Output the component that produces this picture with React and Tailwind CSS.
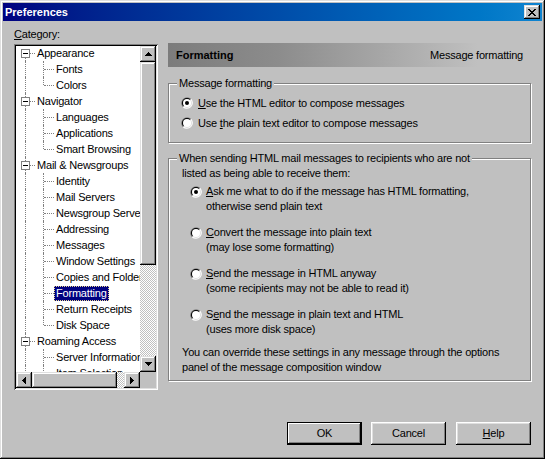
import React from "react";

const raised =
  "shadow-[inset_-1px_-1px_#000,inset_1px_1px_#fff,inset_-2px_-2px_#808080,inset_2px_2px_#dfdfdf]";
const raisedSb =
  "shadow-[inset_-1px_-1px_#000,inset_1px_1px_#dfdfdf,inset_-2px_-2px_#808080,inset_2px_2px_#fff]";
const etched = "border border-[#808080] shadow-[1px_1px_0_#fff,inset_1px_1px_0_#fff]";
const checker =
  "bg-[image:repeating-conic-gradient(#c0c0c0_0%_25%,#fff_0%_50%)] bg-[length:2px_2px]";

function Radio({ checked }) {
  return (
    <svg width="12" height="12" viewBox="0 0 12 12" className="shrink-0">
      <path d="M1.76 10.24 A6 6 0 0 1 10.24 1.76 Z" fill="#808080" />
      <path d="M10.24 1.76 A6 6 0 0 1 1.76 10.24 Z" fill="#fff" />
      <path d="M2.46 9.54 A5 5 0 0 1 9.54 2.46 Z" fill="#000" />
      <path d="M9.54 2.46 A5 5 0 0 1 2.46 9.54 Z" fill="#dfdfdf" />
      <circle cx="6" cy="6" r="4" fill="#fff" />
      {checked && <circle cx="6" cy="6" r="2" fill="#000" />}
    </svg>
  );
}

function Arrow({ dir }) {
  if (dir === "up")
    return (
      <svg width="7" height="4" viewBox="0 0 7 4" shapeRendering="crispEdges">
        <path d="M3 0h1v1h1v1h1v1h1v1H0V3h1V2h1V1h1z" fill="#000" />
      </svg>
    );
  if (dir === "down")
    return (
      <svg width="7" height="4" viewBox="0 0 7 4" shapeRendering="crispEdges">
        <path d="M0 0h7v1H6v1H5v1H4v1H3V3H2V2H1V1H0z" fill="#000" />
      </svg>
    );
  if (dir === "left")
    return (
      <svg width="4" height="7" viewBox="0 0 4 7" shapeRendering="crispEdges">
        <path d="M3 0h1v7H3V6H2V5H1V4H0V3h1V2h1V1h1z" fill="#000" />
      </svg>
    );
  return (
    <svg width="4" height="7" viewBox="0 0 4 7" shapeRendering="crispEdges">
      <path d="M0 0h1v1h1v1h1v1h1v1H3v1H2v1H1v1H0z" fill="#000" />
    </svg>
  );
}

const rows = [
  { t: "Appearance", l: 0, first: true },
  { t: "Fonts", l: 1 },
  { t: "Colors", l: 1, last: true },
  { t: "Navigator", l: 0 },
  { t: "Languages", l: 1 },
  { t: "Applications", l: 1 },
  { t: "Smart Browsing", l: 1, last: true },
  { t: "Mail & Newsgroups", l: 0 },
  { t: "Identity", l: 1 },
  { t: "Mail Servers", l: 1 },
  { t: "Newsgroup Servers", l: 1 },
  { t: "Addressing", l: 1 },
  { t: "Messages", l: 1 },
  { t: "Window Settings", l: 1 },
  { t: "Copies and Folders", l: 1 },
  { t: "Formatting", l: 1, sel: true },
  { t: "Return Receipts", l: 1 },
  { t: "Disk Space", l: 1, last: true },
  { t: "Roaming Access", l: 0 },
  { t: "Server Information", l: 1 },
  { t: "Item Selection", l: 1 },
];

function Row({ t, l, first, last, sel }) {
  return (
    <div className="relative h-[16px] shrink-0 flex items-center whitespace-nowrap">
      <span
        className={`absolute left-[9px] ${first ? "top-[8px]" : "top-0"} bottom-0 border-l border-dotted border-[#808080]`}
      />
      {l === 0 ? (
        <>
          <span className="absolute left-[14px] top-[8px] w-[5px] border-t border-dotted border-[#808080]" />
          <span className="absolute left-[5px] top-[4px] w-[9px] h-[9px] border border-[#808080] bg-white flex items-center justify-center">
            <span className="w-[5px] h-px bg-black" />
          </span>
        </>
      ) : (
        <>
          <span
            className={`absolute left-[27px] top-0 ${last ? "h-[8px]" : "bottom-0"} border-l border-dotted border-[#808080]`}
          />
          <span className="absolute left-[28px] top-[8px] w-[10px] border-t border-dotted border-[#808080]" />
        </>
      )}
      <span
        className={`${l === 0 ? "ml-[19px]" : "ml-[38px]"} px-[1px] leading-[13px] border ${
          sel
            ? "bg-[#000080] text-white border-dotted border-[#e8d890]"
            : "border-transparent text-black"
        }`}
      >
        {t}
      </span>
    </div>
  );
}

function Button({ children, def, className = "" }) {
  return (
    <div
      className={`w-[75px] h-[23px] flex items-center justify-center bg-[#c0c0c0] ${
        def
          ? "border border-black shadow-[inset_-1px_-1px_#000,inset_1px_1px_#fff,inset_-2px_-2px_#808080]"
          : raised
      } ${className}`}
    >
      {children}
    </div>
  );
}

function Option({ checked, l1, l2 }) {
  return (
    <div className="flex items-start gap-[4px]">
      <div className="mt-[2px]">
        <Radio checked={checked} />
      </div>
      <div className="leading-[15px]">
        <div>{l1}</div>
        <div>{l2}</div>
      </div>
    </div>
  );
}

export default function App() {
  return (
    <div
      className={`w-[545px] h-[459px] bg-[#c0c0c0] p-[3px] flex flex-col text-[11px] tracking-[-0.2px] text-black font-['Liberation_Sans',Arial,sans-serif] shadow-[inset_-1px_-1px_#000,inset_1px_1px_#dfdfdf,inset_-2px_-2px_#808080,inset_2px_2px_#fff]`}
    >
      {/* title bar */}
      <div className="h-[18px] shrink-0 flex items-center justify-between pl-[2px] pr-[2px] bg-linear-to-r from-[#000080] to-[#1084d0]">
        <span className="text-white font-bold leading-[13px] tracking-normal">Preferences</span>
        <div className={`w-[16px] h-[14px] bg-[#c0c0c0] flex items-center justify-center ${raisedSb}`}>
          <svg width="8" height="7" viewBox="0 0 8 7" shapeRendering="crispEdges">
            <path
              d="M0 0h2v1H0zM6 0h2v1H6zM1 1h2v1H1zM5 1h2v1H5zM2 2h4v1H2zM3 3h2v1H3zM2 4h4v1H2zM1 5h2v1H1zM5 5h2v1H5zM0 6h2v1H0zM6 6h2v1H6z"
              fill="#000"
            />
          </svg>
        </div>
      </div>

      {/* body */}
      <div className="flex-1 flex flex-col">
        <div className="flex">
          {/* left column */}
          <div className="ml-[11px] w-[144px] flex flex-col">
            <div className="mt-[7px] leading-[13px]">
              <u>C</u>ategory:
            </div>
            <div className="mt-[3px] h-[346px] bg-white p-[2px] shadow-[inset_1px_1px_#808080,inset_-1px_-1px_#fff,inset_2px_2px_#000,inset_-2px_-2px_#dfdfdf]">
              <div className="h-full grid grid-cols-[1fr_16px] grid-rows-[1fr_16px]">
                <div className="overflow-hidden flex flex-col">
                  <div className="-mt-[1px] flex flex-col">
                    {rows.map((r) => (
                      <Row key={r.t} {...r} />
                    ))}
                  </div>
                </div>
                <div className="flex flex-col">
                  <div className={`h-[16px] bg-[#c0c0c0] flex items-center justify-center ${raisedSb}`}>
                    <Arrow dir="up" />
                  </div>
                  <div className={`h-[203px] bg-[#c0c0c0] ${raisedSb}`} />
                  <div className={`flex-1 ${checker}`} />
                  <div className={`h-[16px] bg-[#c0c0c0] flex items-center justify-center ${raisedSb}`}>
                    <Arrow dir="down" />
                  </div>
                </div>
                <div className="flex">
                  <div className={`w-[16px] bg-[#c0c0c0] flex items-center justify-center ${raisedSb}`}>
                    <Arrow dir="left" />
                  </div>
                  <div className={`w-[85px] bg-[#c0c0c0] ${raisedSb}`} />
                  <div className={`flex-1 ${checker}`} />
                  <div className={`w-[16px] bg-[#c0c0c0] flex items-center justify-center ${raisedSb}`}>
                    <Arrow dir="right" />
                  </div>
                </div>
                <div className="bg-[#c0c0c0]" />
              </div>
            </div>
          </div>

          {/* right column */}
          <div className="ml-[10px] w-[365px] flex flex-col">
            <div className="mt-[22px] h-[24px] flex items-center justify-between pl-[8px] pr-[10px] bg-linear-to-r from-[#7c7c7c] via-[#8c8c8c] via-30% to-[#c0c0c0] to-85%">
              <span className="font-bold tracking-normal">Formatting</span>
              <span>Message formatting</span>
            </div>

            <div className={`mt-[16px] w-[363px] h-[60px] flex flex-col ${etched}`}>
              <div className="-mt-[7px] ml-[8px] px-[2px] self-start bg-[#c0c0c0] leading-[13px]">
                Message formatting
              </div>
              <div className="mt-[5px] pl-[12px] flex flex-col gap-[4px]">
                <div className="h-[16px] flex items-center gap-[5px]">
                  <Radio checked />
                  <span>
                    <u>U</u>se the HTML editor to compose messages
                  </span>
                </div>
                <div className="h-[16px] flex items-center gap-[5px]">
                  <Radio />
                  <span>
                    Use <u>t</u>he plain text editor to compose messages
                  </span>
                </div>
              </div>
            </div>

            <div className={`mt-[15px] w-[363px] h-[223px] flex flex-col ${etched}`}>
              <div className="-mt-[8px] ml-[8px] px-[2px] self-start bg-[#c0c0c0] leading-[15px]">
                <div>When sending HTML mail messages to recipients who are not</div>
                <div className="pl-[3px]">listed as being able to receive them:</div>
              </div>
              <div className="mt-[3px] pl-[21px] flex flex-col gap-[11px]">
                <Option
                  checked
                  l1={
                    <>
                      <u>A</u>sk me what to do if the message has HTML formatting,
                    </>
                  }
                  l2="otherwise send plain text"
                />
                <Option
                  l1={
                    <>
                      <u>C</u>onvert the message into plain text
                    </>
                  }
                  l2="(may lose some formatting)"
                />
                <Option
                  l1={
                    <>
                      <u>S</u>end the message in HTML anyway
                    </>
                  }
                  l2="(some recipients may not be able to read it)"
                />
                <Option
                  l1={
                    <>
                      S<u>e</u>nd the message in plain text and HTML
                    </>
                  }
                  l2="(uses more disk space)"
                />
              </div>
              <div className="mt-[8px] pl-[13px] leading-[15px]">
                <div>You can override these settings in any message through the options</div>
                <div>panel of the message composition window</div>
              </div>
            </div>
          </div>
        </div>

        {/* buttons */}
        <div className="mt-auto mb-[11px] pr-[11px] flex justify-end">
          <Button def className="mr-[9px]">
            OK
          </Button>
          <Button className="mr-[10px]">Cancel</Button>
          <Button>
            <span>
              <u>H</u>elp
            </span>
          </Button>
        </div>
      </div>
    </div>
  );
}
